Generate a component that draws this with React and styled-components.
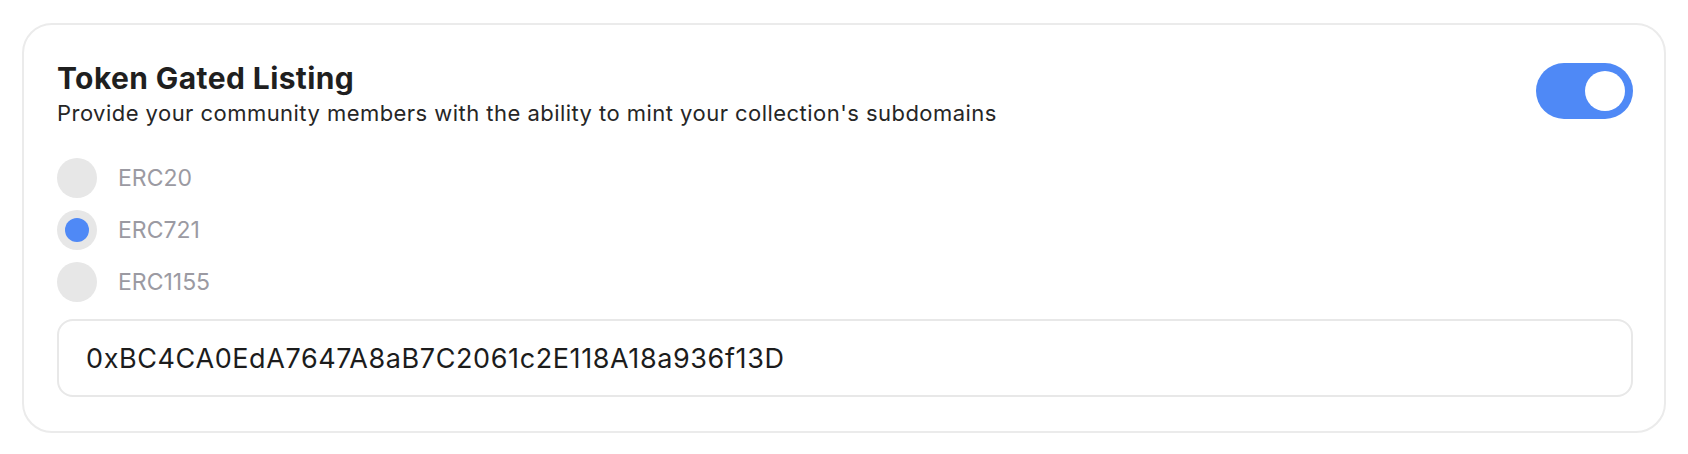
import React, { useState } from "react";
import styled, { createGlobalStyle } from "styled-components";

const GlobalStyle = createGlobalStyle`
  * { box-sizing: border-box; }
  body {
    margin: 0;
    background: #ffffff;
    font-family: "Inter", "Liberation Sans", sans-serif;
  }
`;

// styled-components
const Page = styled.div`
  padding: 23px 22px 0 22px;
`;

const Card = styled.section`
  border: 2px solid #ebebeb;
  border-radius: 30px;
  padding: 32px 31px 34px 33px;
  display: flex;
  flex-direction: column;
`;

const Header = styled.div`
  display: flex;
  justify-content: space-between;
  align-items: flex-start;
`;

const TitleBlock = styled.div`
  display: flex;
  flex-direction: column;
`;

const Title = styled.h2`
  margin: 0;
  font-size: 30px;
  line-height: 42px;
  font-weight: 700;
  color: #1f1f1f;
  letter-spacing: 0.4px;
`;

const Subtitle = styled.p`
  margin: 0;
  font-size: 22px;
  line-height: 28px;
  font-weight: 400;
  color: #262626;
  letter-spacing: 0.46px;
`;

const Toggle = styled.button`
  margin-top: 6px;
  width: 97px;
  height: 56px;
  border: none;
  border-radius: 28px;
  padding: 8px;
  background: ${(p) => (p.$on ? "#4f89f6" : "#e6e6e6")};
  display: flex;
  justify-content: ${(p) => (p.$on ? "flex-end" : "flex-start")};
  cursor: pointer;
  flex-shrink: 0;
`;

const Knob = styled.span`
  width: 40px;
  height: 40px;
  border-radius: 50%;
  background: #ffffff;
`;

const RadioGroup = styled.div`
  margin-top: 31px;
  display: flex;
  flex-direction: column;
  gap: 12px;
`;

const RadioRow = styled.label`
  display: flex;
  align-items: center;
  gap: 21px;
  cursor: pointer;
`;

const RadioCircle = styled.span`
  width: 40px;
  height: 40px;
  border-radius: 50%;
  background: #e7e7e7;
  display: flex;
  align-items: center;
  justify-content: center;

  &::after {
    content: "";
    width: 24px;
    height: 24px;
    border-radius: 50%;
    background: #4f89f6;
    display: ${(p) => (p.$checked ? "block" : "none")};
  }
`;

const RadioLabel = styled.span`
  font-size: 23px;
  color: #9b9aa2;
  font-weight: 400;
`;

const AddressInput = styled.input`
  margin-top: 17px;
  height: 78px;
  width: 100%;
  border: 2px solid #e8e8e8;
  border-radius: 16px;
  padding: 0 27px;
  font-family: "Inter", "Liberation Sans", sans-serif;
  font-size: 27px;
  letter-spacing: 0.6px;
  color: #1c1c1c;
  outline: none;
  background: #ffffff;
`;

const standards = ["ERC20", "ERC721", "ERC1155"];

export default function App() {
  const [on, setOn] = useState(true);
  const [standard, setStandard] = useState("ERC721");

  return (
    <Page>
      <GlobalStyle />
      <Card>
        <Header>
          <TitleBlock>
            <Title>Token Gated Listing</Title>
            <Subtitle>
              Provide your community members with the ability to mint your collection's subdomains
            </Subtitle>
          </TitleBlock>
          <Toggle $on={on} onClick={() => setOn(!on)} aria-label="Toggle token gating">
            <Knob />
          </Toggle>
        </Header>

        <RadioGroup>
          {standards.map((s) => (
            <RadioRow key={s} onClick={() => setStandard(s)}>
              <RadioCircle $checked={standard === s} />
              <RadioLabel>{s}</RadioLabel>
            </RadioRow>
          ))}
        </RadioGroup>

        <AddressInput defaultValue="0xBC4CA0EdA7647A8aB7C2061c2E118A18a936f13D" />
      </Card>
    </Page>
  );
}
